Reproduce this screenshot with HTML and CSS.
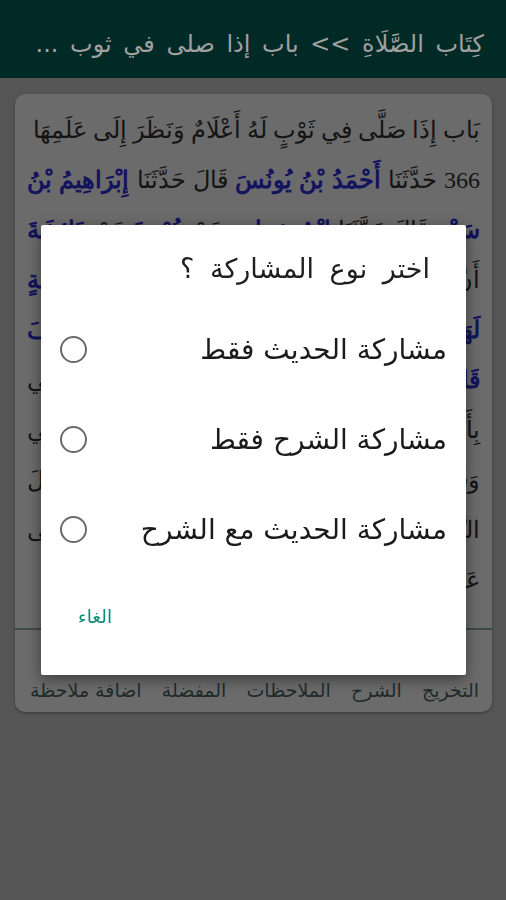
FILE: index.html
```html
<!DOCTYPE html>
<html lang="ar" dir="rtl">
<head>
<meta charset="utf-8">
<title>صحيح البخاري</title>
<link rel="stylesheet" href="styles.css">
</head>
<body>
<header class="topbar">
  <div class="crumb">كِتَاب الصَّلَاةِ &gt;&gt; باب إذا صلى في ثوب ...</div>
</header>
<main class="card">
  <div class="text">
    <p class="line">بَاب إِذَا صَلَّى فِي ثَوْبٍ لَهُ أَعْلَامٌ وَنَظَرَ إِلَى عَلَمِهَا</p>
    <p class="body">366 حَدَّثَنَا <span class="rawi">أَحْمَدُ بْنُ يُونُسَ</span> قَالَ حَدَّثَنَا <span class="rawi">إِبْرَاهِيمُ بْنُ سَعْدٍ</span> قَالَ حَدَّثَنَا <span class="rawi">ابْنُ شِهَابٍ</span> عَنْ <span class="rawi">عُرْوَةَ</span> عَنْ <span class="rawi">عَائِشَةَ</span> أَنَّ النَّبِيَّ صَلَّى اللَّهُ عَلَيْهِ وَسَلَّمَ صَلَّى فِي <span class="rawi">خَمِيصَةٍ لَهَا أَعْلَامٌ</span> فَنَظَرَ إِلَى أَعْلَامِهَا نَظْرَةً فَلَمَّا <span class="rawi">انْصَرَفَ قَالَ اذْهَبُوا بِخَمِيصَتِي هَذِهِ إِلَى أَبِي جَهْمٍ</span> وَأْتُونِي بِأَنْبِجَانِيَّةِ أَبِي جَهْمٍ فَإِنَّهَا أَلْهَتْنِي آنِفًا عَنْ صَلَاتِي وَقَالَ <span class="rawi">هِشَامُ بْنُ عُرْوَةَ</span> عَنْ أَبِيهِ عَنْ عَائِشَةَ قَالَ النَّبِيُّ صَلَّى اللَّهُ عَلَيْهِ وَسَلَّمَ كُنْتُ أَنْظُرُ إِلَى عَلَمِهَا وَأَنَا فِي الصَّلَاةِ فَأَخَافُ أَنْ تَفْتِنَنِي</p>
  </div>
  <nav class="tabs">
    <span class="tab">التخريج</span>
    <span class="tab">الشرح</span>
    <span class="tab">الملاحظات</span>
    <span class="tab">المفضلة</span>
    <span class="tab">اضافة ملاحظة</span>
  </nav>
</main>

<div class="scrim">
  <div class="dialog" role="dialog">
    <div class="dialog-title">اختر نوع المشاركة ؟</div>
    <div class="options">
      <label class="option"><span class="opt-text">مشاركة الحديث فقط</span><span class="radio"></span></label>
      <label class="option"><span class="opt-text">مشاركة الشرح فقط</span><span class="radio"></span></label>
      <label class="option"><span class="opt-text">مشاركة الحديث مع الشرح</span><span class="radio"></span></label>
    </div>
    <div class="actions">
      <button class="btn">الغاء</button>
    </div>
  </div>
</div>
</body>
</html>
```

FILE: styles.css
```css
* { box-sizing: border-box; }
html, body { margin: 0; padding: 0; }
body {
  width: 506px;
  height: 900px;
  background: #555555;
  font-family: "DejaVu Sans", sans-serif;
  overflow: hidden;
}
.topbar {
  height: 78px;
  background: #012a26;
  display: flex;
  align-items: center;
  padding: 0 22px 0 20px;
}
.crumb {
  color: #a0a0a0;
  font-size: 24px;
  word-spacing: 4px;
  white-space: nowrap;
  padding-top: 10px;
}
.card {
  margin: 16px 14px 0 15px;
  height: 618px;
  background: #6b6b6b;
  border-radius: 10px;
  box-shadow: 0 1px 3px rgba(0,0,0,0.35);
  display: flex;
  flex-direction: column;
  overflow: hidden;
}
.text {
  flex: 1;
  overflow: hidden;
  padding: 11px 12px 0 12px;
  font-family: "Liberation Serif", "DejaVu Serif", serif;
  font-size: 24px;
  line-height: 50px;
  color: #141414;
  text-align: justify;
  border-bottom: 2px solid #3d4a48;
}
.text p { margin: 0; }
.rawi { color: #13135e; font-weight: bold; }
.tabs {
  height: 82px;
  display: flex;
  justify-content: space-between;
  align-items: flex-end;
  padding: 0 13px 9px 15px;
  font-size: 19px;
  line-height: 26px;
  color: #1f2b29;
}
.scrim {
  position: fixed;
  inset: 0;
}
.dialog {
  position: absolute;
  left: 41px;
  top: 225px;
  width: 425px;
  height: 450px;
  background: #ffffff;
  border-radius: 2px;
  box-shadow: 0 4px 14px rgba(0,0,0,0.45);
  display: flex;
  flex-direction: column;
}
.dialog-title {
  padding: 27px 36px 0 20px;
  height: 79px;
  font-size: 27px;
  word-spacing: 7px;
  line-height: 34px;
  color: #1e1e1e;
}
.options { display: flex; flex-direction: column; }
.option {
  height: 90px;
  display: flex;
  align-items: center;
  justify-content: space-between;
  padding: 0 19px 0 19px;
}
.opt-text {
  font-size: 28px;
  color: #1b1b1b;
}
.radio {
  width: 27px;
  height: 27px;
  border: 2px solid #6a6a6a;
  border-radius: 50%;
}
.actions {
  display: flex;
  justify-content: flex-end;
  padding: 30px 0 0 37px;
}
.btn {
  background: none;
  border: 0;
  padding: 0;
  font-family: "DejaVu Sans", sans-serif;
  font-size: 18.5px;
  line-height: 26px;
  color: #0b8a78;
}
```
